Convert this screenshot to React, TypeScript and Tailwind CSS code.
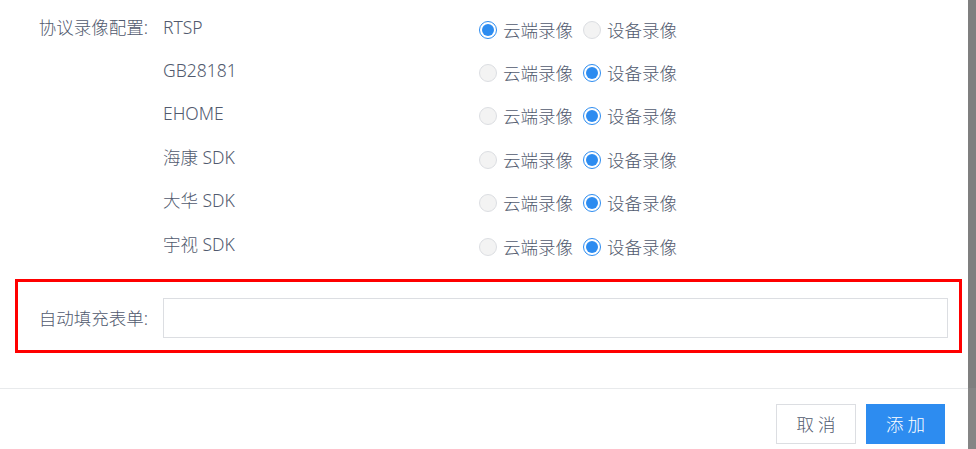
import React, { useState } from 'react';

type Mode = 'cloud' | 'device';

const protocols: { name: string; mode: Mode }[] = [
  { name: 'RTSP', mode: 'cloud' },
  { name: 'GB28181', mode: 'device' },
  { name: 'EHOME', mode: 'device' },
  { name: '海康 SDK', mode: 'device' },
  { name: '大华 SDK', mode: 'device' },
  { name: '宇视 SDK', mode: 'device' },
];

const Radio = ({ checked, label, onClick }: { checked: boolean; label: string; onClick: () => void }) => (
  <label className="flex items-center cursor-pointer" onClick={onClick}>
    {checked ? (
      <span className="w-[18px] h-[18px] rounded-full border border-[#2d8cf0] bg-white flex items-center justify-center">
        <span className="w-[12px] h-[12px] rounded-full bg-[#2d8cf0]" />
      </span>
    ) : (
      <span className="w-[18px] h-[18px] rounded-full border border-[#dcdee2] bg-[#f3f3f3]" />
    )}
    <span className="ml-[6px]">{label}</span>
  </label>
);

export default function App() {
  const [modes, setModes] = useState<Mode[]>(protocols.map(p => p.mode));

  const setMode = (index: number, mode: Mode) => {
    setModes(prev => prev.map((m, i) => (i === index ? mode : m)));
  };

  return (
    <div
      className="flex w-[976px] h-[449px] overflow-hidden text-[17.5px] font-light text-[#515a6e]"
      style={{ fontFamily: '"Noto Sans", "Noto Sans CJK SC", sans-serif' }}
    >
      <div className="w-[968px] flex flex-col bg-white">
        <div className="pt-[5px] flex">
          <div className="w-[163px] pr-[15px] text-right h-[43.4px] flex items-center justify-end">协议录像配置:</div>
          <div className="flex flex-col">
            {protocols.map((p, i) => (
              <div key={p.name} className="h-[43.4px] flex items-center">
                <div className="w-[316px]">{p.name}</div>
                <div className="flex items-center gap-[10px] pt-[6px]">
                  <Radio checked={modes[i] === 'cloud'} label="云端录像" onClick={() => setMode(i, 'cloud')} />
                  <Radio checked={modes[i] === 'device'} label="设备录像" onClick={() => setMode(i, 'device')} />
                </div>
              </div>
            ))}
          </div>
        </div>

        <div className="mt-[14px] ml-[15px] w-[947px] h-[74px] border-[3px] border-[#ff0000] flex items-center pr-[11px] pt-[4px]">
          <div className="w-[145px] pr-[15px] text-right">自动填充表单:</div>
          <input className="flex-1 h-[40px] border border-[#dcdee2] bg-white outline-none px-2" />
        </div>

        <div className="mt-[35px] border-t border-[#e8eaec] flex justify-end gap-[10px] pt-[15px] pr-[23px]">
          <button className="w-[80px] h-[40px] border border-[#dcdee2] bg-white text-[#515a6e] tracking-[4px] pl-[4px]">取消</button>
          <button className="w-[79px] h-[40px] bg-[#2d8cf0] text-white tracking-[4px] pl-[4px]">添加</button>
        </div>
      </div>
      <div className="w-[8px] flex flex-col">
        <div className="h-[388px] bg-[#7f7f7f]" />
        <div className="flex-1 bg-[#858585]" />
      </div>
    </div>
  );
}
